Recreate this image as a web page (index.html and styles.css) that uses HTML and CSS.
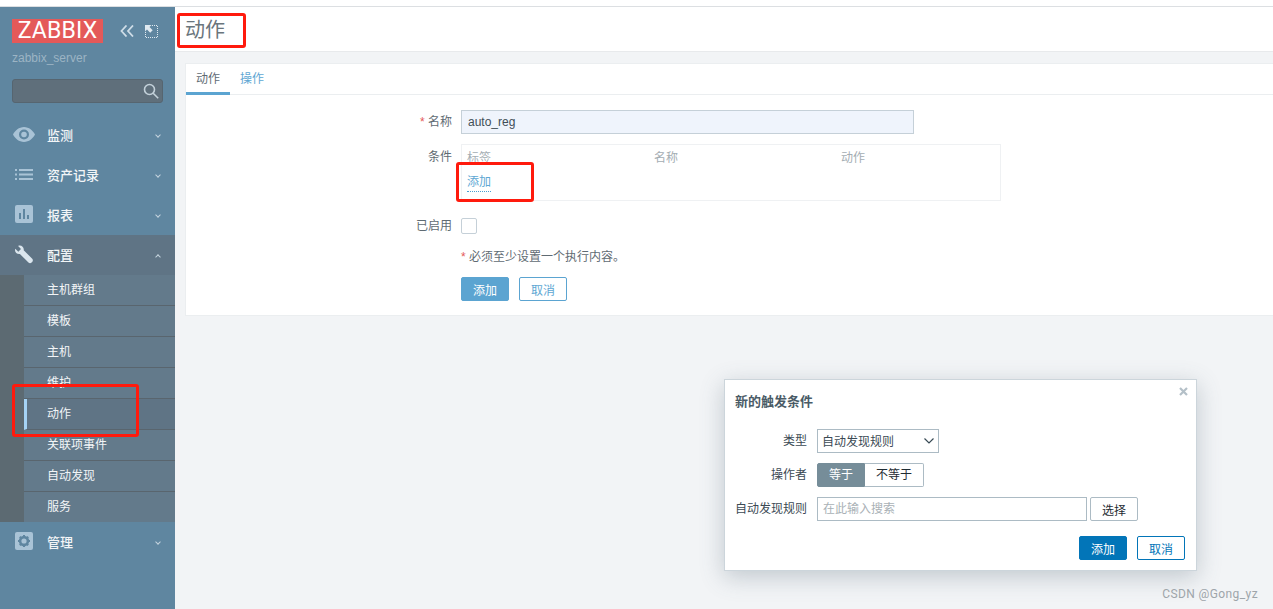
FILE: index.html
```html
<!DOCTYPE html>
<html lang="zh-CN">
<head>
  <meta charset="UTF-8" />
  <title>动作</title>
  <link rel="stylesheet" href="styles.css">
</head>
<body>
<div class="page">
  <aside class="sidebar">
    <div class="brand">
      <span class="logo">ZABBIX</span>
      <svg class="collapse" width="14" height="12" viewBox="0 0 14 12" fill="none" stroke="#cfdde7" stroke-width="1.800"><path d="M6.500.500 1.500 6l5 5.500M13 .5 8 6l5 5.500"/></svg>
      <svg class="expand" width="13" height="13" viewBox="0 0 13 13" fill="none" stroke="#dfe9f0"><path stroke-dasharray="1 1" d="M7 .5h5.500v12H.5V7"/><path fill="#dfe9f0" stroke="none" d="M0 0h6.500L4.500 2l3.200 3.200L5.200 7.700 2 4.500 0 6.500z"/></svg>
    </div>
    <div class="server">zabbix_server</div>
    <div class="search">
      <svg width="16" height="16" viewBox="0 0 16 16" fill="none" stroke="#c3d1da" stroke-width="1.600"><circle cx="6.500" cy="6.500" r="5"/><path d="m10.200 10.200 5 5"/></svg>
    </div>
    <ul class="menu">
      <li class="menu-item">
        <svg class="menu-icon eye" width="22" height="15" viewBox="0 0 22 15"><path fill="#a9c3d6" fill-rule="evenodd" d="M11 0c5 0 9 3.700 11 7.500C20 11.300 16 15 11 15S2 11.300 0 7.500C2 3.700 6 0 11 0zm0 2.500a5 5 0 1 0 0 10 5 5 0 0 0 0-10zm0 2.200a2.800 2.800 0 1 1 0 5.600 2.800 2.800 0 0 1 0-5.600z"/></svg>
        <span>监测</span><i class="chev"></i>
      </li>
      <li class="menu-item">
        <svg class="menu-icon" width="18" height="11" viewBox="0 0 18 11" fill="#a9c3d6"><path d="M0 0h2v2H0zM4 0h14v2H4zM0 4.500h2v2H0zM4 4.500h14v2H4zM0 9h2v2H0zM4 9h14v2H4z"/></svg>
        <span>资产记录</span><i class="chev"></i>
      </li>
      <li class="menu-item">
        <svg class="menu-icon" width="18" height="18" viewBox="0 0 18 18"><rect width="18" height="18" rx="2" fill="#a9c3d6"/><path fill="#5f86a0" d="M4 8h2v6H4zM8 4h2v10H8zM12 10h2v4h-2z"/></svg>
        <span>报表</span><i class="chev"></i>
      </li>
      <li class="menu-group">
        <div class="menu-item open">
          <svg class="menu-icon" width="18" height="19" viewBox="0 0 19 19"><path fill="#dbe6ee" d="M5 0c2.600 0 4.700 2.300 4.200 5l9 9c.9.900.9 2.400 0 3.300l-.7.700c-.9.900-2.400.900-3.300 0l-9-9C2.500 9.500 0 7.500 0 5c0-.6.100-1 .3-1.500L3.500 6.500 6.300 3.700 3.300.4C3.800.1 4.400 0 5 0z"/></svg>
          <span>配置</span><i class="chev up"></i>
        </div>
        <ul class="submenu">
          <li>主机群组</li>
          <li>模板</li>
          <li>主机</li>
          <li>维护</li>
          <li class="current">动作</li>
          <li>关联项事件</li>
          <li>自动发现</li>
          <li>服务</li>
        </ul>
      </li>
      <li class="menu-item">
        <svg class="menu-icon" width="18" height="18" viewBox="0 0 18 18"><rect width="18" height="18" rx="2" fill="#a9c3d6"/><circle cx="9" cy="9" r="3.900" fill="none" stroke="#5f86a0" stroke-width="2.600"/><path stroke="#5f86a0" stroke-width="2" d="M9 3v2M9 13v2M3 9h2M13 9h2M4.800 4.800l1.400 1.400M11.800 11.800l1.400 1.400M4.800 13.200l1.400-1.400M11.800 6.200l1.400-1.400"/></svg>
        <span>管理</span><i class="chev"></i>
      </li>
    </ul>
  </aside>

  <main class="main">
    <header class="title-bar"><h1>动作</h1></header>
    <section class="panel">
      <nav class="tabs">
        <a class="tab active">动作</a>
        <a class="tab">操作</a>
      </nav>
      <form class="form">
        <div class="row name-row">
          <label><em>*</em> 名称</label>
          <div class="name-input">auto_reg</div>
        </div>
        <div class="row cond-row">
          <label>条件</label>
          <div class="cond-box">
            <div class="cond-head"><span>标签</span><span>名称</span><span>动作</span></div>
            <a class="link">添加</a>
          </div>
        </div>
        <div class="row check-row">
          <label>已启用</label>
          <span class="check"></span>
        </div>
        <div class="row note-row">
          <label></label>
          <span><em>*</em> 必须至少设置一个执行内容。</span>
        </div>
        <div class="row btn-row">
          <label></label>
          <button type="button" class="btn soft">添加</button>
          <button type="button" class="btn soft-line">取消</button>
        </div>
      </form>
    </section>
  </main>
</div>

<div class="dialog">
  <svg class="close" width="9" height="9" viewBox="0 0 9 9" stroke="#b4c0c8" stroke-width="2.200"><path d="M1 1l7 7M8 1 1 8"/></svg>
  <h2>新的触发条件</h2>
  <div class="dialog-row type-row">
    <label>类型</label>
    <div class="select">自动发现规则<svg width="10" height="6" viewBox="0 0 10 6" fill="none" stroke="#384a55" stroke-width="1.200"><path d="m.5.500 4.500 4.500L9.500.500"/></svg></div>
  </div>
  <div class="dialog-row op-row">
    <label>操作者</label>
    <div class="toggle"><span class="on">等于</span><span>不等于</span></div>
  </div>
  <div class="dialog-row rule-row">
    <label>自动发现规则</label>
    <div class="rule-input">在此输入搜索</div>
    <button type="button" class="pick">选择</button>
  </div>
  <div class="dialog-foot">
    <button type="button" class="btn solid">添加</button>
    <button type="button" class="btn line">取消</button>
  </div>
</div>

<div class="mark mark-title"></div>
<div class="mark mark-add"></div>
<div class="mark mark-menu"></div>
<div class="watermark">CSDN @Gong_yz</div>
</body>
</html>
```

FILE: styles.css
```css
* {
  box-sizing: border-box;
}

html, body {
  height: 100%;
}

body {
  margin: 0;
  overflow: hidden;
  background: #fff;
  color: #5f6b73;
  font-family: "Liberation Sans", "Noto Sans CJK SC", sans-serif;
  font-size: 12px;
}

ul {
  list-style: none;
  margin: 0;
  padding: 0;
}

.page {
  display: flex;
  height: 603px;
  margin-top: 6px;
  border-top: 1px solid #dcdfe2;
}

/* sidebar */
.sidebar {
  width: 175px;
  flex: none;
  background: #5f86a0;
  color: #f2f5f7;
}

.brand {
  display: flex;
  align-items: center;
  padding: 12px 0 0 12px;
}

.logo {
  width: 91px;
  height: 24px;
  background: #e45959;
  color: #fff;
  font-family: "Roboto", sans-serif;
  font-size: 23px;
  font-weight: 400;
  line-height: 24px;
  text-align: center;
  letter-spacing: 0.200px;
}

.collapse {
  margin-left: 17px;
}

.expand {
  margin-left: 11px;
}

.server {
  padding: 8px 0 0 12px;
  color: #9cb4c4;
  line-height: 15px;
}

.search {
  display: flex;
  align-items: center;
  justify-content: flex-end;
  width: 151px;
  height: 24px;
  margin: 13px 0 0 12px;
  padding-right: 3px;
  background: #5f6f7b;
  border: 1px solid #566570;
  border-radius: 3px;
}

.menu {
  margin-top: 12px;
}

.menu-item {
  position: relative;
  display: flex;
  align-items: center;
  height: 40px;
  padding-bottom: 2px;
  font-size: 13px;
  font-weight: 500;
}

.menu-item span {
  position: absolute;
  left: 47px;
}

.menu-icon {
  margin-left: 15px;
}

.menu-icon.eye {
  margin-left: 13px;
}

.menu-item.open {
  background: #5f7485;
}

.chev {
  position: absolute;
  right: 15px;
  top: 18px;
  width: 4px;
  height: 4px;
  border-right: 1px solid #c5d4de;
  border-bottom: 1px solid #c5d4de;
  transform: rotate(45deg);
}

.chev.up {
  top: 20px;
  transform: rotate(225deg);
}

.submenu {
  padding-left: 24px;
  background: #5c6a72;
}

.submenu li {
  height: 31px;
  padding-left: 23px;
  line-height: 30px;
  background: #637a8b;
  border-bottom: 1px solid #59656e;
}

.submenu li:last-child {
  height: 30px;
  border-bottom: 0;
}

.submenu .current {
  padding-left: 20px;
  background: #5f7485;
  border-left: 3px solid #a5d3f5;
}

/* main area */
.main {
  flex: 1;
  background: #f2f4f6;
}

.title-bar {
  height: 45px;
  background: #fff;
  border-bottom: 1px solid #e8eaec;
}

h1 {
  margin: 0;
  padding: 1px 0 0 10px;
  color: #6a757c;
  font-size: 20px;
  font-weight: 400;
  line-height: 45px;
}

.panel {
  height: 253px;
  margin: 11px 0 0 10px;
  background: #fff;
  border: 1px solid #ebeef0;
  border-right: 0;
}

.tabs {
  display: flex;
  height: 31px;
  border-bottom: 1px solid #ebeef0;
}

.tab {
  width: 44px;
  padding-top: 7px;
  color: #5f6b73;
  text-align: center;
  line-height: 17px;
}

.tab + .tab {
  color: #5ea7d3;
}

.active {
  height: 31px;
  border-bottom: 3px solid #5ba4d1;
}

.form {
  padding-top: 15px;
}

.row {
  display: flex;
}

.row label {
  width: 275px;
  flex: none;
  padding-right: 9px;
  text-align: right;
}

em {
  color: #e45959;
  font-style: normal;
}

.name-row {
  align-items: center;
}

.name-row label {
  padding-bottom: 3px;
}

.name-input {
  width: 453px;
  height: 24px;
  padding-left: 6px;
  background: #eff4fc;
  border: 1px solid #c5d0d8;
  color: #3f4e57;
  line-height: 22px;
}

.cond-row {
  margin-top: 10px;
}

.cond-row label {
  line-height: 26px;
}

.cond-box {
  width: 540px;
  height: 57px;
  padding: 6px 5px;
  border: 1px solid #eff1f3;
}

.cond-head {
  display: grid;
  grid-template-columns: 187px 187px 100px;
  color: #a4adb3;
  line-height: 15px;
}

.link {
  display: inline-block;
  margin-top: 8px;
  color: #5ea7d3;
  line-height: 17px;
  border-bottom: 1px dotted #4a9fd1;
}

.check-row {
  margin-top: 16px;
}

.check-row label {
  line-height: 19px;
}

.check {
  width: 16px;
  height: 16px;
  margin-top: 1px;
  border: 1px solid #c5d0d8;
  border-radius: 2px;
}

.note-row {
  margin-top: 13px;
  line-height: 17px;
}

.btn-row {
  margin-top: 11px;
}

.btn {
  height: 24px;
  width: 48px;
  padding: 0;
  border-radius: 2px;
  font: inherit;
}

.soft {
  background: #5ba4d1;
  border: 1px solid #5ba4d1;
  color: #fff;
}

.soft-line {
  margin-left: 10px;
  background: #fff;
  border: 1px solid #5ba4d1;
  color: #5ea7d3;
}

/* dialog */
.dialog {
  position: absolute;
  left: 724px;
  top: 379px;
  width: 473px;
  height: 192px;
  padding: 0 11px 0 10px;
  background: #fff;
  border: 1px solid #ccd5db;
  box-shadow: 0 6px 22px rgba(80, 100, 115, 0.3);
  color: #3b4a54;
}

.close {
  position: absolute;
  right: 8px;
  top: 7px;
}

h2 {
  margin: 0;
  padding-top: 13px;
  color: #4a5b66;
  font-size: 13px;
  font-weight: 700;
  line-height: 17px;
}

.dialog-row {
  display: flex;
  align-items: center;
}

.dialog-row label {
  width: 72px;
  flex: none;
  margin-right: 10px;
  padding-bottom: 3px;
  text-align: right;
  white-space: nowrap;
}

.type-row {
  margin-top: 19px;
}

.select {
  display: flex;
  align-items: center;
  justify-content: space-between;
  width: 122px;
  height: 24px;
  padding: 0 4px 1px;
  border: 1px solid #acbbc4;
}

.op-row {
  margin-top: 10px;
}

.toggle {
  display: flex;
  height: 24px;
  border-radius: 2px;
  color: #1f2c33;
}

.toggle span {
  width: 59px;
  line-height: 22px;
  text-align: center;
  border: 1px solid #acbbc4;
  border-left: 0;
  border-radius: 0 2px 2px 0;
}

.toggle .on {
  width: 48px;
  color: #fff;
  background: #768d99;
  border: 1px solid #768d99;
  border-radius: 2px 0 0 2px;
}

.rule-row {
  margin-top: 10px;
}

.rule-input {
  width: 270px;
  height: 24px;
  padding-left: 5px;
  border: 1px solid #acbbc4;
  color: #a9b1b6;
  line-height: 22px;
}

.pick {
  width: 48px;
  height: 24px;
  margin-left: 3px;
  padding: 0;
  background: #fff;
  border: 1px solid #acbbc4;
  border-radius: 2px;
  color: #1f2c33;
  font: inherit;
}

.dialog-foot {
  display: flex;
  justify-content: flex-end;
  gap: 10px;
  margin-top: 15px;
}

.solid {
  background: #0275b8;
  border: 1px solid #0275b8;
  color: #fff;
}

.line {
  background: #fff;
  border: 1px solid #0275b8;
  color: #0275b8;
}

/* red annotation boxes drawn on the screenshot */
.mark {
  position: absolute;
  border: 3px solid #ff1a0d;
  border-radius: 3px;
}

.mark-title {
  left: 177px;
  top: 13px;
  width: 69px;
  height: 35px;
}

.mark-add {
  left: 456px;
  top: 162px;
  width: 78px;
  height: 40px;
}

.mark-menu {
  left: 12px;
  top: 384px;
  width: 127px;
  height: 53px;
}

.watermark {
  position: absolute;
  right: 15px;
  bottom: 8px;
  color: #9ea5aa;
  font-family: "Roboto", sans-serif;
  font-size: 12px;
  letter-spacing: 0.400px;
}
```
